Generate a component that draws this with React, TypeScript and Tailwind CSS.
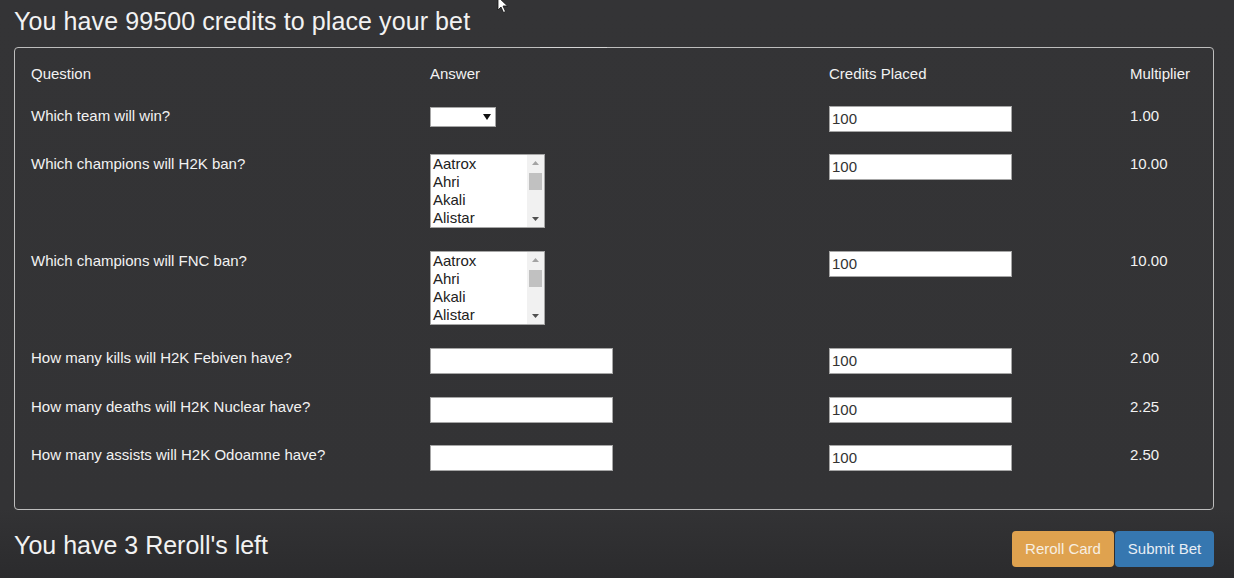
import React from 'react';

type Row = {
  question: string;
  answer: 'select' | 'list' | 'text';
  multiplier: string;
  gap: string;
};

const rows: Row[] = [
  { question: 'Which team will win?', answer: 'select', multiplier: '1.00', gap: 'mt-[22px]' },
  { question: 'Which champions will H2K ban?', answer: 'list', multiplier: '10.00', gap: 'mt-[22px]' },
  { question: 'Which champions will FNC ban?', answer: 'list', multiplier: '10.00', gap: 'mt-[23px]' },
  { question: 'How many kills will H2K Febiven have?', answer: 'text', multiplier: '2.00', gap: 'mt-[23px]' },
  { question: 'How many deaths will H2K Nuclear have?', answer: 'text', multiplier: '2.25', gap: 'mt-[23px]' },
  { question: 'How many assists will H2K Odoamne have?', answer: 'text', multiplier: '2.50', gap: 'mt-[22px]' },
];

const champions = ['Aatrox', 'Ahri', 'Akali', 'Alistar'];

// Tiny dropdown with the native look
const TeamSelect = () => (
  <div className="relative h-[20px] w-[66px] border border-[#a6a6a6] bg-white">
    <svg className="absolute right-[4px] top-[6px]" width="8" height="6" viewBox="0 0 8 6">
      <path d="M0 0h8L4 6z" fill="#111" />
    </svg>
  </div>
);

// Multi select list box with classic scrollbar
const ChampionList = () => (
  <div className="flex h-[74px] w-[115px] border border-[#a6a6a6] bg-white">
    <div className="flex-1 overflow-hidden pl-[2px] text-[15px] leading-[18px] text-[#222]">
      {champions.map((c) => (
        <div key={c}>{c}</div>
      ))}
    </div>
    <div className="relative w-[17px] bg-[#f1f1f1]">
      <svg className="absolute left-[5px] top-[6px]" width="7" height="4" viewBox="0 0 7 4">
        <path d="M0 4L3.5 0 7 4z" fill="#a3a3a3" />
      </svg>
      <div className="absolute left-[2px] top-[18px] h-[17px] w-[13px] bg-[#c1c1c1]" />
      <svg className="absolute bottom-[6px] left-[5px]" width="7" height="4" viewBox="0 0 7 4">
        <path d="M0 0h7L3.5 4z" fill="#505050" />
      </svg>
    </div>
  </div>
);

const TextBox = ({ value }: { value?: string }) => (
  <div className="flex h-[26px] w-[183px] items-center border border-[#a6a6a6] bg-white pl-[2px] text-[15px] text-[#333]">
    {value}
  </div>
);

export default function App() {
  return (
    <div
      className="relative min-h-[578px] w-full bg-gradient-to-b from-[#343436] via-[#333335] via-[88%] to-[#2b2b2d] px-[14px] pt-[6px] text-[#f2f2f2]"
      style={{ fontFamily: '"Liberation Sans", Arial, sans-serif' }}
    >
      {/* mouse pointer from the capture */}
      <svg className="absolute left-[497px] top-[-4px]" width="12" height="18" viewBox="0 0 12 18">
        <path d="M1 1v13l3-3 2.5 5.5 2-1L6 10h4.5z" fill="#fff" stroke="#111" strokeWidth="0.8" />
      </svg>

      <div className="w-[1200px]">
        <h3 className="text-[25px] leading-[30px] tracking-[0.1px]">You have 99500 credits to place your bet</h3>

        <div className="relative mt-[11px] rounded-[4px] border border-[#bdbdbd] px-[16px] pb-[38px] pt-[16px] text-[15px]">
          {/* lighter patch on the top edge */}
          <div className="absolute left-[525px] top-[-1px] h-[1px] w-[67px] bg-[#d4d4d4]" />

          <div className="grid grid-cols-[399px_399px_301px_1fr] leading-5">
            <div>Question</div>
            <div>Answer</div>
            <div>Credits Placed</div>
            <div>Multiplier</div>
          </div>

          <div className="flex flex-col">
            {rows.map((r) => (
              <div key={r.question} className={`${r.gap} grid grid-cols-[399px_399px_301px_1fr] items-start leading-5`}>
                <div>{r.question}</div>
                <div>
                  {r.answer === 'select' && (
                    <div className="pt-[1px]">
                      <TeamSelect />
                    </div>
                  )}
                  {r.answer === 'list' && <ChampionList />}
                  {r.answer === 'text' && <TextBox />}
                </div>
                <div>
                  <TextBox value="100" />
                </div>
                <div>{r.multiplier}</div>
              </div>
            ))}
          </div>
        </div>

        <div className="mt-[20px] flex items-start justify-between">
          <h3 className="text-[25px] leading-[30px]">You have 3 Reroll's left</h3>
          <div className="mt-[1px] flex gap-[1px]">
            <button className="h-[36px] w-[102px] rounded-[4px] bg-[#dfa24f] text-[15px] text-[#f7efe2]">
              Reroll Card
            </button>
            <button className="h-[36px] w-[99px] rounded-[4px] bg-[#3677b0] text-[15px] text-[#e8eef5]">
              Submit Bet
            </button>
          </div>
        </div>
      </div>
    </div>
  );
}
